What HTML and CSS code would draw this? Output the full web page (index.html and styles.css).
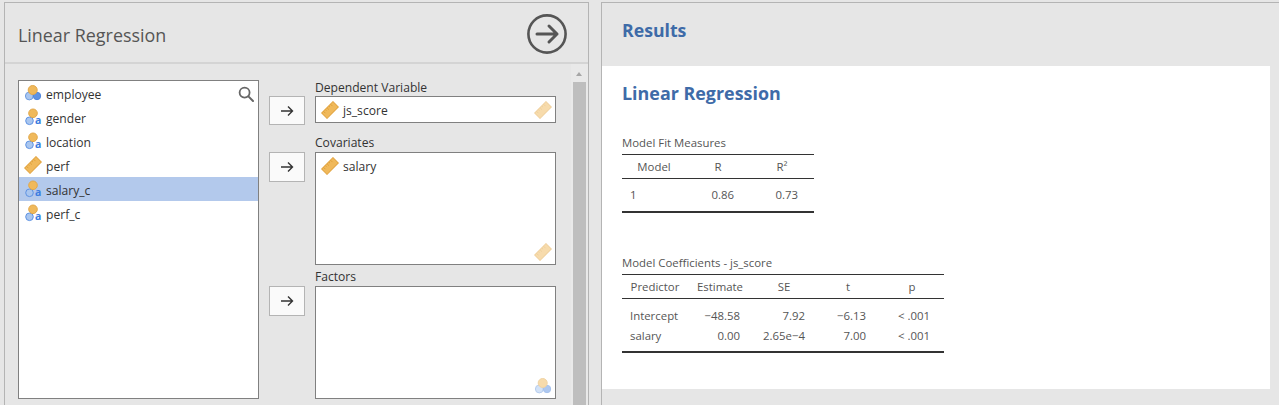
FILE: index.html
```html
<!DOCTYPE html>
<html lang="en">
<head>
<meta charset="utf-8">
<title>Linear Regression</title>
<link rel="stylesheet" href="styles.css">
</head>
<body>
<svg class="defs" width="0" height="0" aria-hidden="true">
  <defs>
    <symbol id="ruler" viewBox="0 0 18 18">
      <g transform="rotate(-45 9 9)">
        <rect x="1" y="5.2" width="16" height="7.6" fill="#f0b95b" stroke="#e2a23c" stroke-width="1"/>
        <path d="M3.5 5.5v2.5M6 5.5v1.5M8.5 5.5v2.5M11 5.5v1.5M13.5 5.5v2.5" stroke="#d9982f" stroke-width=".7" fill="none"/>
      </g>
    </symbol>
    <symbol id="nominal" viewBox="0 0 18 18">
      <circle cx="5.3" cy="12" r="3.9" fill="#a9c6ef" stroke="#6f9de0"/>
      <circle cx="13" cy="12" r="3.7" fill="#5f93e3" stroke="#5288dc"/>
      <circle cx="8.7" cy="6" r="4.5" fill="#f0b95b" stroke="#e2a84a"/>
    </symbol>
    <symbol id="text" viewBox="0 0 18 18">
      <circle cx="5.5" cy="12.8" r="3.8" fill="#a9c6ef" stroke="#5f93e3"/>
      <circle cx="9" cy="5.3" r="4.3" fill="#f0b95b" stroke="#e2a84a"/>
      <text x="11" y="16.4" class="icon-a">a</text>
    </symbol>
  </defs>
</svg>
<div class="app">
  <section class="options">
    <header class="options-head">
      <h1 class="options-title">Linear Regression</h1>
      <svg class="go" viewBox="0 0 40 40" width="40" height="40">
        <circle cx="20" cy="20" r="18.6" fill="none" stroke="#555" stroke-width="2.6"/>
        <path d="M10 20H30M22 12L30 20L22 28" fill="none" stroke="#555" stroke-width="3" stroke-linecap="round" stroke-linejoin="round"/>
      </svg>
    </header>
    <div class="options-body">
      <div class="source">
        <svg class="search" viewBox="0 0 16 16" width="16" height="16">
          <circle cx="6.6" cy="6.6" r="5" fill="none" stroke="#666" stroke-width="1.8"/>
          <path d="M10.4 10.4L15 15" stroke="#666" stroke-width="2" stroke-linecap="round"/>
        </svg>
        <div class="var"><svg class="ico"><use href="#nominal"/></svg>employee</div>
        <div class="var"><svg class="ico"><use href="#text"/></svg>gender</div>
        <div class="var"><svg class="ico"><use href="#text"/></svg>location</div>
        <div class="var"><svg class="ico"><use href="#ruler"/></svg>perf</div>
        <div class="var selected"><svg class="ico"><use href="#text"/></svg>salary_c</div>
        <div class="var"><svg class="ico"><use href="#text"/></svg>perf_c</div>
      </div>
      <div class="targets">
        <div class="target target-dep">
          <button class="move move-dep"><svg viewBox="0 0 14 12" width="14" height="12"><path d="M1 6H12.5M8 1.5L12.5 6L8 10.5" fill="none" stroke="#333" stroke-width="1.4"/></svg></button>
          <div class="field">
            <div class="field-label">Dependent Variable</div>
            <div class="box box-dep">
              <div class="assigned"><svg class="ico"><use href="#ruler"/></svg>js_score</div>
              <svg class="ico hint"><use href="#ruler"/></svg>
            </div>
          </div>
        </div>
        <div class="target target-cov">
          <button class="move"><svg viewBox="0 0 14 12" width="14" height="12"><path d="M1 6H12.5M8 1.5L12.5 6L8 10.5" fill="none" stroke="#333" stroke-width="1.4"/></svg></button>
          <div class="field">
            <div class="field-label">Covariates</div>
            <div class="box box-cov">
              <div class="assigned"><svg class="ico"><use href="#ruler"/></svg>salary</div>
              <svg class="ico hint"><use href="#ruler"/></svg>
            </div>
          </div>
        </div>
        <div class="target target-fac">
          <button class="move"><svg viewBox="0 0 14 12" width="14" height="12"><path d="M1 6H12.5M8 1.5L12.5 6L8 10.5" fill="none" stroke="#333" stroke-width="1.4"/></svg></button>
          <div class="field">
            <div class="field-label">Factors</div>
            <div class="box box-fac">
              <svg class="ico hint"><use href="#nominal"/></svg>
            </div>
          </div>
        </div>
      </div>
      <div class="scrollbar">
        <div class="scroll-up"></div>
        <div class="scroll-thumb"></div>
      </div>
    </div>
  </section>
  <section class="results">
    <header class="results-head">Results</header>
    <div class="results-page">
      <h2 class="results-title">Linear Regression</h2>
      <div class="table-title">Model Fit Measures</div>
      <table class="fit">
        <thead><tr><th>Model</th><th>R</th><th>R²</th></tr></thead>
        <tbody><tr><td class="left">1</td><td>0.86</td><td>0.73</td></tr></tbody>
      </table>
      <div class="table-title title-coef">Model Coefficients - js_score</div>
      <table class="coef">
        <thead><tr><th>Predictor</th><th>Estimate</th><th>SE</th><th>t</th><th>p</th></tr></thead>
        <tbody>
          <tr><td class="left">Intercept</td><td>−48.58</td><td>7.92</td><td>−6.13</td><td>&lt; .001</td></tr>
          <tr><td class="left">salary</td><td>0.00</td><td>2.65e−4</td><td>7.00</td><td>&lt; .001</td></tr>
        </tbody>
      </table>
    </div>
  </section>
</div>
</body>
</html>
```
FILE: styles.css
```css
* { box-sizing: border-box; }
html, body { margin: 0; height: 100%; overflow: hidden; }
body { background: #e6e6e6; font-family: "Open Sans", "Noto Sans", sans-serif; color: #333; }
.defs { position: absolute; }
.icon-a { font: 700 10.5px "Open Sans", sans-serif; fill: #3b7de0; }

.app { display: flex; height: 405px; padding: 2px 0 0 4px; }

.options { width: 585px; border: 1px solid #b4b4b4; border-bottom: 0; display: flex; flex-direction: column; flex: none; }
.options-head { height: 61px; flex: none; display: flex; justify-content: space-between; align-items: center; padding: 2px 21px 0 13px; border-bottom: 2px solid #d4d4d4; }
.options-title { margin: 2px 0 0; font-size: 17.9px; font-weight: 400; color: #555; }
.options-body { flex: 1; display: flex; min-height: 0; padding-left: 13px; }

.source { position: relative; width: 241px; height: 319px; margin-top: 16px; background: #fff; border: 1px solid #808080; flex: none; }
.search { position: absolute; right: 4px; top: 5px; }
.var { height: 24px; display: flex; align-items: center; font-size: 12.1px; color: #333; padding: 2px 0 0 5px; gap: 4px; }
.var .ico { margin-top: -2px; }
.var.selected { background: #b3c9ec; }
.ico { width: 18px; height: 18px; flex: none; }

.targets { width: 312px; flex: none; margin-top: 16px; padding-left: 10px; }
.target { display: flex; gap: 10px; align-items: flex-start; }
.target-dep { height: 56px; padding-top: 1px; }
.target-cov { height: 134px; }
.move { margin-top: 16px; width: 36px; height: 30px; background: #fafafa; border: 1px solid #b4b4b4; display: flex; align-items: center; justify-content: center; padding: 0; flex: none; }
.move-dep { margin-top: 15px; height: 29px; }
.field { width: 241px; flex: none; }
.field-label { font-size: 12.1px; line-height: 14px; height: 14px; color: #333; }
.box { position: relative; background: #fff; border: 1px solid #808080; margin-top: 2px; }
.box-dep { height: 27px; margin-top: 1px; }
.box-cov { height: 113px; }
.box-fac { height: 113px; }
.assigned { display: flex; align-items: center; gap: 4px; font-size: 12.1px; height: 25px; padding: 2px 0 0 5px; color: #333; }
.assigned .ico { margin-top: -2px; }
.hint { position: absolute; right: 3px; bottom: 3px; opacity: .5; }

.scrollbar { width: 17px; flex: none; padding: 0 2px; display: flex; flex-direction: column; background: #e9e9e9; }
.scroll-up { height: 18px; position: relative; }
.scroll-up::after { content: ""; position: absolute; left: 3px; top: 8px; border: 3.5px solid transparent; border-top: 0; border-bottom: 4px solid #a6a6a6; }
.scroll-thumb { flex: 1; background: #bebebe; }

.results { margin-left: 12px; flex: 1; min-width: 0; border: 1px solid #b4b4b4; border-right: 0; border-bottom: 0; }
.results-head { height: 63px; padding: 15px 0 0 20px; font-size: 17.7px; line-height: 24px; font-weight: 700; color: #3e6ba8; }
.results-page { width: 668px; height: 323px; background: #fff; padding: 14px 0 0 20px; }
.results-title { margin: 0 0 29px; font-size: 17.9px; line-height: 26px; font-weight: 700; color: #3e6ba8; }

.table-title { font-size: 11.4px; line-height: 16px; color: #555; height: 19px; }
.title-coef { margin-top: 42px; }
table { border-collapse: collapse; table-layout: fixed; font-size: 11.4px; color: #555; border-top: 1px solid #333; border-bottom: 2px solid #333; }
th { font-weight: 400; height: 24px; padding: 0; border-bottom: 1px solid #333; text-align: center; }
td { padding: 0; text-align: right; }
td.left { text-align: left; padding-left: 8px; }
.fit { width: 192px; }
.fit th { width: 64px; }
.fit td { height: 33px; padding-right: 16px; }
.fit td.left { padding-right: 0; }
.coef { width: 322px; }
.coef th { width: 64px; }
.coef th:first-child { width: 66px; }
.coef td { height: 20px; padding-right: 14px; }
.coef td.left { padding-right: 0; }
.coef tbody tr:first-child td { height: 28px; padding-top: 7px; }
.coef tbody tr:last-child td { height: 26px; padding-bottom: 6px; }
.coef td:nth-child(2) { padding-right: 12px; }
.coef td:nth-child(3) { padding-right: 11px; }
```
